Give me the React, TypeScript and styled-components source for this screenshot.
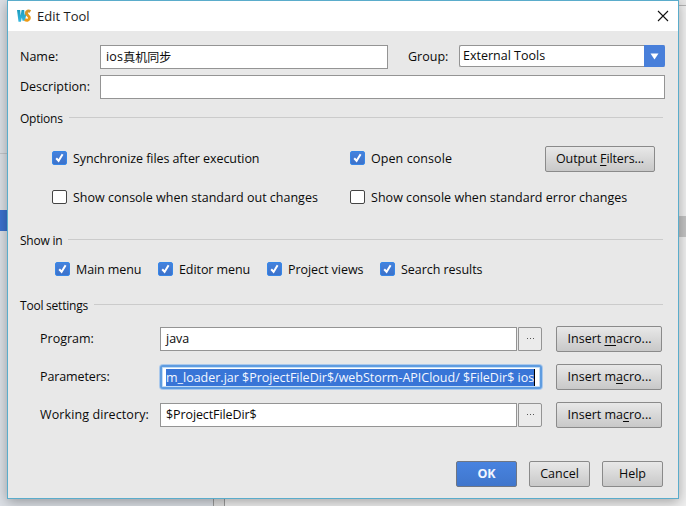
import React from 'react';
import styled, { createGlobalStyle, css } from 'styled-components';

const GlobalStyle = createGlobalStyle`
  * { box-sizing: border-box; }
  body {
    margin: 0;
    overflow: hidden;
    font-family: "Open Sans", "Noto Sans CJK SC", sans-serif;
    font-size: 12.5px;
    line-height: 18px;
    color: #0a0a0a;
  }
`;

const Desktop = styled.div`
  position: relative;
  width: 686px;
  height: 506px;
  overflow: hidden;
  display: grid;
  grid-template-columns: 214px 10px 1fr;
  background: #f0f0f0;
`;

const ProjectPane = styled.div`
  background: #dce0e6;
  border-right: 1px solid #9c9c9c;
  padding-top: 153px;
`;

const PaneLine = styled.div`
  height: 1px;
  background: #c3c6ca;
`;

const SelectedRow = styled.div`
  margin-top: 56px;
  height: 21px;
  background: #3b72cf;
`;

const Splitter = styled.div`
  background: #e2e2e2;
`;

const EditorPane = styled.div`
  display: flex;
  flex-direction: column;
  border-left: 1px solid #9c9c9c;
`;

const EditorTabs = styled.div`
  height: 6px;
  border-bottom: 1px solid #b4b4b4;
  background: #e8e8e8;
`;

const EditorStripe = styled.div`
  margin-top: 210px;
  height: 21px;
  background: #c4c4c4;
`;

const Dialog = styled.div`
  position: absolute;
  left: 7px;
  top: 0;
  width: 672px;
  height: 499px;
  display: flex;
  flex-direction: column;
  border: 1px solid #5aaccb;
  background: #e8e8e8;
  box-shadow: 0 3px 12px rgba(0, 0, 0, 0.32);
`;

const TitleBar = styled.header`
  flex: none;
  height: 30px;
  display: flex;
  align-items: center;
  padding: 0 9px 0 8px;
  background: #fff;
  font-size: 13px;
`;

const Title = styled.span`
  flex: 1;
  margin-left: 5px;
  color: #1c1c1c;
`;

const Text = styled.span<{ $track?: number }>`
  white-space: pre;
  letter-spacing: ${(p) => p.$track ?? 0}px;
`;

const Content = styled.main`
  flex: 1;
  display: flex;
  flex-direction: column;
  padding: 14px 13px 0 12px;
`;

const FieldRow = styled.div`
  flex: none;
  display: grid;
  grid-template-columns: 80px 1fr;
  height: 24px;
  margin-bottom: 6px;
`;

const NameFields = styled.div`
  display: grid;
  grid-template-columns: 288px 71px 206px;
`;

const FieldLabel = styled.label<{ $indent?: number }>`
  height: 24px;
  line-height: 24px;
  padding-left: ${(p) => p.$indent ?? 0}px;
`;

const TextField = styled.div`
  display: flex;
  align-items: center;
  height: 24px;
  padding: 0 5px;
  border: 1px solid #949494;
  background: #fff;
  white-space: pre;
`;

const Cjk = styled.span`
  font-family: "Noto Sans CJK SC", sans-serif;
  font-size: 12px;
`;

const ComboBox = styled.div`
  display: flex;
  height: 22px;
  border: 1px solid #949494;
  border-right: 0;
  border-radius: 2px;
  background: #fff;
`;

const ComboValue = styled.span`
  flex: 1;
  padding-left: 3px;
  line-height: 20px;
`;

const ComboArrow = styled.span`
  display: flex;
  align-items: center;
  justify-content: center;
  width: 21px;
  height: 22px;
  margin-top: -1px;
  border-radius: 0 2px 2px 0;
  background: #487fda;
`;

const Section = styled.section<{ $height: number }>`
  flex: none;
  height: ${(p) => p.$height}px;
`;

const SectionHeader = styled.h2`
  display: flex;
  align-items: center;
  gap: 6px;
  height: 18px;
  margin: 0 2px 0 0;
  font-size: 12px;
  font-weight: 400;
  line-height: 18px;
  letter-spacing: -0.22px;

  &::after {
    content: '';
    flex: 1;
    height: 1px;
    margin-bottom: 3px;
    background: #cbcbcb;
  }
`;

const Sections = styled.div`
  padding-top: 5px;
`;

const OptionGrid = styled.div`
  display: grid;
  grid-template-columns: 298px 195px 110px;
  grid-template-rows: 26px 26px;
  row-gap: 13px;
  align-items: center;
  margin: 18px 0 0 32px;
`;

const ShowInRow = styled.div`
  display: grid;
  grid-template-columns: 103px 109px 113px auto;
  margin: 11px 0 0 35px;
`;

const CheckItem = styled.label<{ $wide?: boolean }>`
  display: flex;
  align-items: center;
  gap: 6px;
  height: 18px;
  ${(p) => p.$wide && 'grid-column: span 2;'}
`;

const CheckMark = styled.span<{ $on: boolean }>`
  flex: none;
  display: flex;
  align-items: center;
  justify-content: center;
  width: 15px;
  height: 14px;
  margin-bottom: 2px;
  border-radius: 2px;
  border: 1px solid #444;
  background: #fff;
  ${(p) =>
    p.$on &&
    css`
      border-color: #3687e8;
      background: linear-gradient(#4582dc, #3c72cb);
    `}
`;

const Button = styled.button<{ $primary?: boolean }>`
  height: 26px;
  padding: 0;
  border: 1px solid #8a8a8a;
  border-radius: 2px;
  background: linear-gradient(#e8e8e8, #c8c8c8);
  font: inherit;
  line-height: 22px;
  color: #0a0a0a;
  text-align: center;
  ${(p) =>
    p.$primary &&
    css`
      border-color: #6f7683;
      background: linear-gradient(#4883e0, #4076cc);
      font-weight: 700;
      color: #f2f6ff;
    `}
`;

const Mnemonic = styled.span`
  text-decoration: underline;
  text-decoration-thickness: 1px;
  text-underline-offset: 2px;
  text-decoration-skip-ink: none;
`;

const SettingRow = styled.div<{ $focused?: boolean }>`
  display: grid;
  grid-template-columns: 140px ${(p) => (p.$focused ? '382px' : '357px 25px')} 106px;
  column-gap: 0;
  height: 26px;
  align-items: center;
  margin-bottom: 12px;
`;

const Settings = styled.div`
  padding-top: 11px;
`;

const SettingButton = styled(Button)`
  width: 106px;
  margin-left: 14px;
  padding-left: 1px;
`;

const BrowseButton = styled.span`
  display: flex;
  align-items: center;
  justify-content: center;
  height: 24px;
  margin-left: 1px;
  border: 1px solid #949494;
  border-radius: 0 2px 2px 0;
  background: #ebebeb;
`;

const FocusedField = styled.div`
  display: flex;
  align-items: center;
  width: 382px;
  height: 24px;
  padding: 0 4px;
  border: 2px solid #5f9ce0;
  border-radius: 3px;
  box-shadow: inset 0 0 0 1px #c1dcf6, 0 0 0 1px #abc9ec;
  background: #fff;
`;

const Selection = styled.span`
  flex: none;
  height: 17px;
  width: 369px;
  border-right: 1px solid #000;
  background: #3875d7;
  color: #f3f7ff;
  line-height: 17px;
  letter-spacing: -0.01px;
  white-space: pre;
`;

const Actions = styled.footer`
  display: grid;
  grid-template-columns: repeat(3, 61px);
  column-gap: 12px;
  justify-content: end;
  margin: 32px 2px 0 0;
`;

function Logo() {
  return (
    <svg width="16" height="16" viewBox="0 0 16 16">
      <defs>
        <linearGradient id="blue" x2="0" y2="1">
          <stop stopColor="#1c9bbd" />
          <stop offset="1" stopColor="#35b8e0" />
        </linearGradient>
        <linearGradient id="gold" x2="0" y2="1">
          <stop stopColor="#d2952b" />
          <stop offset="1" stopColor="#ef9a14" />
        </linearGradient>
      </defs>
      <path d="M1 2H4.2L4.6 7.6 5.6 2H8.2L8.6 7.4 9.3 3.5 10.2 7 8.9 12.8H6.5L5.9 9.4 4.9 13.8H2.5Z" fill="url(#blue)" />
      <path d="M14.4 3.6C12.4 2.4 10.3 3.1 10.4 5.1 10.5 7.4 13.5 7.7 13.4 10 13.3 12.2 10.9 12.7 8.8 11.6" fill="none" stroke="url(#gold)" strokeWidth="2.9" />
    </svg>
  );
}

function CloseIcon() {
  return (
    <svg width="12" height="12" viewBox="0 0 12 12">
      <path d="M1 1L11 11M11 1L1 11" stroke="#111" strokeWidth="1.1" />
    </svg>
  );
}

function Dots() {
  return (
    <svg width="9" height="2" viewBox="0 0 9 2" shapeRendering="crispEdges">
      <path d="M1 0.5h1M4 0.5h1M7 0.5h1" stroke="#555" strokeWidth="1" />
    </svg>
  );
}

type CheckProps = { on?: boolean; wide?: boolean; label: string; track?: number };

function Check({ on = false, wide, label, track }: CheckProps) {
  return (
    <CheckItem $wide={wide}>
      <CheckMark $on={on}>
        {on && (
          <svg width="11" height="10" viewBox="0 0 11 10">
            <path d="M2.2 5.2L4.6 7.8 8.6 1.3" fill="none" stroke="#fff" strokeWidth="2" />
          </svg>
        )}
      </CheckMark>
      <Text $track={track}>{label}</Text>
    </CheckItem>
  );
}

function MacroButton({ before, hot, after }: { before: string; hot: string; after: string }) {
  return (
    <SettingButton>
      <Text>
        {before}
        <Mnemonic>{hot}</Mnemonic>
        {after}
      </Text>
    </SettingButton>
  );
}

export default function App() {
  return (
    <Desktop>
      <GlobalStyle />
      <ProjectPane>
        <PaneLine />
        <SelectedRow />
      </ProjectPane>
      <Splitter />
      <EditorPane>
        <EditorTabs />
        <EditorStripe />
      </EditorPane>

      <Dialog>
        <TitleBar>
          <Logo />
          <Title>Edit Tool</Title>
          <CloseIcon />
        </TitleBar>
        <Content>
          <FieldRow>
            <FieldLabel>Name:</FieldLabel>
            <NameFields>
              <TextField>
                <Text $track={0.2}>ios</Text>
                <Cjk>真机同步</Cjk>
              </TextField>
              <FieldLabel $indent={20}>Group:</FieldLabel>
              <ComboBox>
                <ComboValue>External Tools</ComboValue>
                <ComboArrow>
                  <svg width="9" height="7" viewBox="0 0 9 7">
                    <path d="M0.5 0.5H8.5L4.5 6.5Z" fill="#fff" />
                  </svg>
                </ComboArrow>
              </ComboBox>
            </NameFields>
          </FieldRow>
          <FieldRow>
            <FieldLabel>Description:</FieldLabel>
            <TextField />
          </FieldRow>

          <Sections>
            <Section $height={122}>
              <SectionHeader>Options</SectionHeader>
              <OptionGrid>
                <Check on label="Synchronize files after execution" track={-0.07} />
                <Check on label="Open console" track={0.07} />
                <Button>
                  <Text $track={-0.12}>
                    Output <Mnemonic>F</Mnemonic>ilters...
                  </Text>
                </Button>
                <Check label="Show console when standard out changes" />
                <Check wide label="Show console when standard error changes" track={0.03} />
              </OptionGrid>
            </Section>

            <Section $height={65}>
              <SectionHeader>Show in</SectionHeader>
              <ShowInRow>
                <Check on label="Main menu" track={-0.08} />
                <Check on label="Editor menu" track={-0.08} />
                <Check on label="Project views" track={-0.05} />
                <Check on label="Search results" track={-0.05} />
              </ShowInRow>
            </Section>

            <Section $height={132}>
              <SectionHeader>Tool settings</SectionHeader>
              <Settings>
                <SettingRow>
                  <FieldLabel $indent={20}><Text>Program:</Text></FieldLabel>
                  <TextField>java</TextField>
                  <BrowseButton><Dots /></BrowseButton>
                  <MacroButton before="Insert " hot="m" after="acro..." />
                </SettingRow>
                <SettingRow $focused>
                  <FieldLabel $indent={20}><Text $track={-0.12}>Parameters:</Text></FieldLabel>
                  <FocusedField>
                    <Selection>m_loader.jar $ProjectFileDir$/webStorm-APICloud/ $FileDir$ ios</Selection>
                  </FocusedField>
                  <MacroButton before="Insert m" hot="a" after="cro..." />
                </SettingRow>
                <SettingRow>
                  <FieldLabel $indent={20}><Text $track={0.1}>Working directory:</Text></FieldLabel>
                  <TextField><Text $track={-0.1}>$ProjectFileDir$</Text></TextField>
                  <BrowseButton><Dots /></BrowseButton>
                  <MacroButton before="Insert ma" hot="c" after="ro..." />
                </SettingRow>
              </Settings>
            </Section>
          </Sections>

          <Actions>
            <Button $primary>OK</Button>
            <Button>Cancel</Button>
            <Button>Help</Button>
          </Actions>
        </Content>
      </Dialog>
    </Desktop>
  );
}
